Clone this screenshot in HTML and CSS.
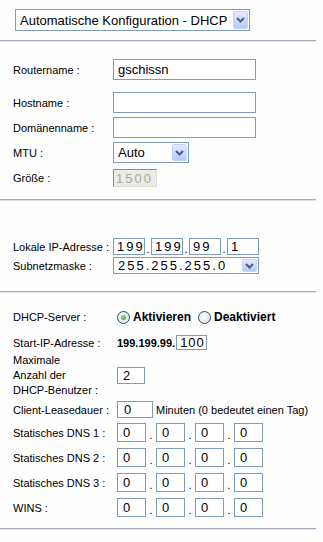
FILE: index.html
```html
<!DOCTYPE html>
<html lang="de">
<head>
  <meta charset="UTF-8" />
  <title>Setup</title>
  <link rel="stylesheet" href="styles.css">
</head>
<body>
  <!-- Verbindungstyp -->
  <div class="top">
    <div class="select select-wan">
      <span>Automatische Konfiguration - DHCP</span>
      <span class="arrow"><svg width="9" height="6" viewBox="0 0 9 6"><path d="M1 1 L4.5 4.5 L8 1" fill="none" stroke="#4d6185" stroke-width="2"/></svg></span>
    </div>
  </div>
  <div class="sep"></div>

  <!-- Optionale Einstellungen -->
  <div class="section s1">
    <div class="row r-router">
      <div class="label">Routername :</div>
      <input class="text wide" type="text" value="gschissn" />
    </div>
    <div class="row r-host">
      <div class="label">Hostname :</div>
      <input class="text wide" type="text" />
    </div>
    <div class="row r-domain">
      <div class="label">Domänenname :</div>
      <input class="text wide" type="text" />
    </div>
    <div class="row r-mtu">
      <div class="label">MTU :</div>
      <div class="select select-mtu">
        <span>Auto</span>
        <span class="arrow"><svg width="9" height="6" viewBox="0 0 9 6"><path d="M1 1 L4.5 4.5 L8 1" fill="none" stroke="#4d6185" stroke-width="2"/></svg></span>
      </div>
    </div>
    <div class="row r-size">
      <div class="label">Größe :</div>
      <input class="text size" type="text" value="1500" disabled />
    </div>
  </div>
  <div class="sep"></div>

  <!-- Netzwerk -->
  <div class="section s2">
    <div class="row r-ip">
      <div class="label">Lokale IP-Adresse :</div>
      <input class="text ip" type="text" value="199" /><span class="dot">.</span>
      <input class="text ip" type="text" value="199" /><span class="dot">.</span>
      <input class="text ip" type="text" value="99" /><span class="dot">.</span>
      <input class="text ip" type="text" value="1" />
    </div>
    <div class="row r-mask">
      <div class="label">Subnetzmaske :</div>
      <div class="select select-mask">
        <span>255.255.255.0</span>
        <span class="arrow"><svg width="9" height="6" viewBox="0 0 9 6"><path d="M1 1 L4.5 4.5 L8 1" fill="none" stroke="#4d6185" stroke-width="2"/></svg></span>
      </div>
    </div>
  </div>
  <div class="sep"></div>

  <!-- DHCP -->
  <div class="section s3">
    <div class="row r-dhcp">
      <div class="label">DHCP-Server :</div>
      <span class="radio checked"></span><span class="radio-text">Aktivieren</span>
      <span class="radio"></span><span class="radio-text">Deaktiviert</span>
    </div>
    <div class="row r-start">
      <div class="label">Start-IP-Adresse :</div>
      <span class="prefix">199.199.99.</span>
      <input class="text start" type="text" value="100" />
    </div>
    <div class="row r-max">
      <div class="label">Maximale<br>Anzahl der<br>DHCP-Benutzer :</div>
      <input class="text max" type="text" value="2" />
    </div>
    <div class="row r-lease">
      <div class="label">Client-Leasedauer :</div>
      <input class="text lease" type="text" value="0" />
      <span class="hint">Minuten (0 bedeutet einen Tag)</span>
    </div>
    <div class="row r-dns">
      <div class="label">Statisches DNS 1 :</div>
      <input class="text dns" type="text" value="0" /><span class="dot dns-dot">.</span>
      <input class="text dns" type="text" value="0" /><span class="dot dns-dot">.</span>
      <input class="text dns" type="text" value="0" /><span class="dot dns-dot">.</span>
      <input class="text dns" type="text" value="0" />
    </div>
    <div class="row r-dns">
      <div class="label">Statisches DNS 2 :</div>
      <input class="text dns" type="text" value="0" /><span class="dot dns-dot">.</span>
      <input class="text dns" type="text" value="0" /><span class="dot dns-dot">.</span>
      <input class="text dns" type="text" value="0" /><span class="dot dns-dot">.</span>
      <input class="text dns" type="text" value="0" />
    </div>
    <div class="row r-dns">
      <div class="label">Statisches DNS 3 :</div>
      <input class="text dns" type="text" value="0" /><span class="dot dns-dot">.</span>
      <input class="text dns" type="text" value="0" /><span class="dot dns-dot">.</span>
      <input class="text dns" type="text" value="0" /><span class="dot dns-dot">.</span>
      <input class="text dns" type="text" value="0" />
    </div>
    <div class="row r-dns last">
      <div class="label">WINS :</div>
      <input class="text dns" type="text" value="0" /><span class="dot dns-dot">.</span>
      <input class="text dns" type="text" value="0" /><span class="dot dns-dot">.</span>
      <input class="text dns" type="text" value="0" /><span class="dot dns-dot">.</span>
      <input class="text dns" type="text" value="0" />
    </div>
  </div>
  <div class="sep"></div>
</body>
</html>
```

FILE: styles.css
```css
body {
  margin: 0;
  background-color: #fcfdfc;
  font-family: "Liberation Sans", Arial, sans-serif;
  font-size: 11px;
  color: #000;
}

/* Trennlinie */
.sep {
  height: 1px;
  margin-right: 7px;
  background-color: #a9abbd;
  border-bottom: 1px solid #e2e3ea;
}

.top {
  padding: 9px 0 9px 15px;
}

/* Auswahlfelder im XP-Stil */
.select {
  display: flex;
  align-items: center;
  justify-content: space-between;
  box-sizing: border-box;
  border: 1px solid #7f9db9;
  background-color: #fff;
  font-size: 13px;
  padding: 1px 1px 1px 4px;
}

.select .arrow {
  display: flex;
  align-items: center;
  justify-content: center;
  box-sizing: border-box;
  width: 15px;
  height: 100%;
  border: 1px solid #c3d3fd;
  border-radius: 2px;
  background: linear-gradient(#e1eafe, #b7cbf6);
}

.select-wan {
  width: 235px;
  height: 22px;
}

.select-mtu {
  width: 76px;
  height: 21px;
}

.select-mask {
  width: 146px;
  height: 17px;
  letter-spacing: 2px;
}

.select-mask .arrow {
  letter-spacing: 0;
}

.section {
  padding-left: 13px;
}

.row {
  display: flex;
  align-items: center;
}

.label {
  width: 100px;
  flex-shrink: 0;
}

/* Eingabefelder */
.text {
  box-sizing: border-box;
  margin: 0;
  border: 1px solid #7f9db9;
  background-color: #fff;
  font-family: "Liberation Sans", Arial, sans-serif;
  font-size: 13px;
  color: #000;
  padding: 0 0 0 4px;
  outline: none;
}

.wide {
  width: 143px;
  height: 21px;
}

.size {
  width: 44px;
  height: 18px;
  padding-left: 2px;
  background-color: #ebebe8;
  border-color: #8d8d8d #dcdcd6 #dcdcd6 #8d8d8d;
  color: #aca899;
  letter-spacing: 2px;
}

.ip {
  width: 32px;
  height: 17px;
  padding-left: 3px;
  letter-spacing: 2px;
}

.dot {
  width: 6px;
  text-align: center;
  align-self: flex-end;
  line-height: 12px;
}

/* Abschnitt 1 */
.s1 {
  padding-top: 17px;
  padding-bottom: 12px;
}

.r-router { margin-bottom: 12px; }
.r-host { margin-bottom: 4px; }
.r-domain { margin-bottom: 4px; }
.r-mtu { margin-bottom: 6px; }

/* Abschnitt 2 */
.s2 {
  padding-top: 37px;
  padding-bottom: 17px;
}

.r-ip { margin-bottom: 2px; }

/* Abschnitt 3 */
.s3 {
  padding-top: 17px;
  padding-bottom: 11px;
}

.s3 .label {
  width: 104px;
}

.r-dhcp {
  height: 14px;
  margin-bottom: 11px;
}

.radio {
  box-sizing: border-box;
  width: 13px;
  height: 13px;
  border: 1px solid #1c5180;
  border-radius: 50%;
  background: radial-gradient(circle at 40% 35%, #ffffff, #dcdcd7);
  position: relative;
}

.radio.checked::after {
  content: "";
  position: absolute;
  left: 3px;
  top: 3px;
  width: 5px;
  height: 5px;
  border-radius: 50%;
  background: radial-gradient(circle at 40% 35%, #8ee68e, #21a121);
}

.radio-text {
  font-size: 12px;
  font-weight: bold;
  margin: 0 7px 0 3px;
}

.r-start {
  height: 15px;
  margin-bottom: 3px;
}

.prefix {
  font-weight: bold;
  margin-right: 1px;
}

.start {
  width: 31px;
  height: 15px;
  padding-left: 3px;
  line-height: 13px;
  letter-spacing: 1px;
}

.r-max {
  line-height: 15px;
  margin-bottom: 3px;
}

.max {
  width: 28px;
  height: 17px;
  padding-left: 5px;
}

.r-lease { margin-bottom: 5px; }

.lease {
  width: 36px;
  height: 17px;
  padding-left: 6px;
}

.hint {
  margin-left: 3px;
}

.r-dns { margin-bottom: 6px; }
.r-dns.last { margin-bottom: 0; }

.dns {
  width: 29px;
  height: 19px;
  padding-left: 5px;
}

.dns-dot {
  width: 10px;
  line-height: 13px;
}
```
